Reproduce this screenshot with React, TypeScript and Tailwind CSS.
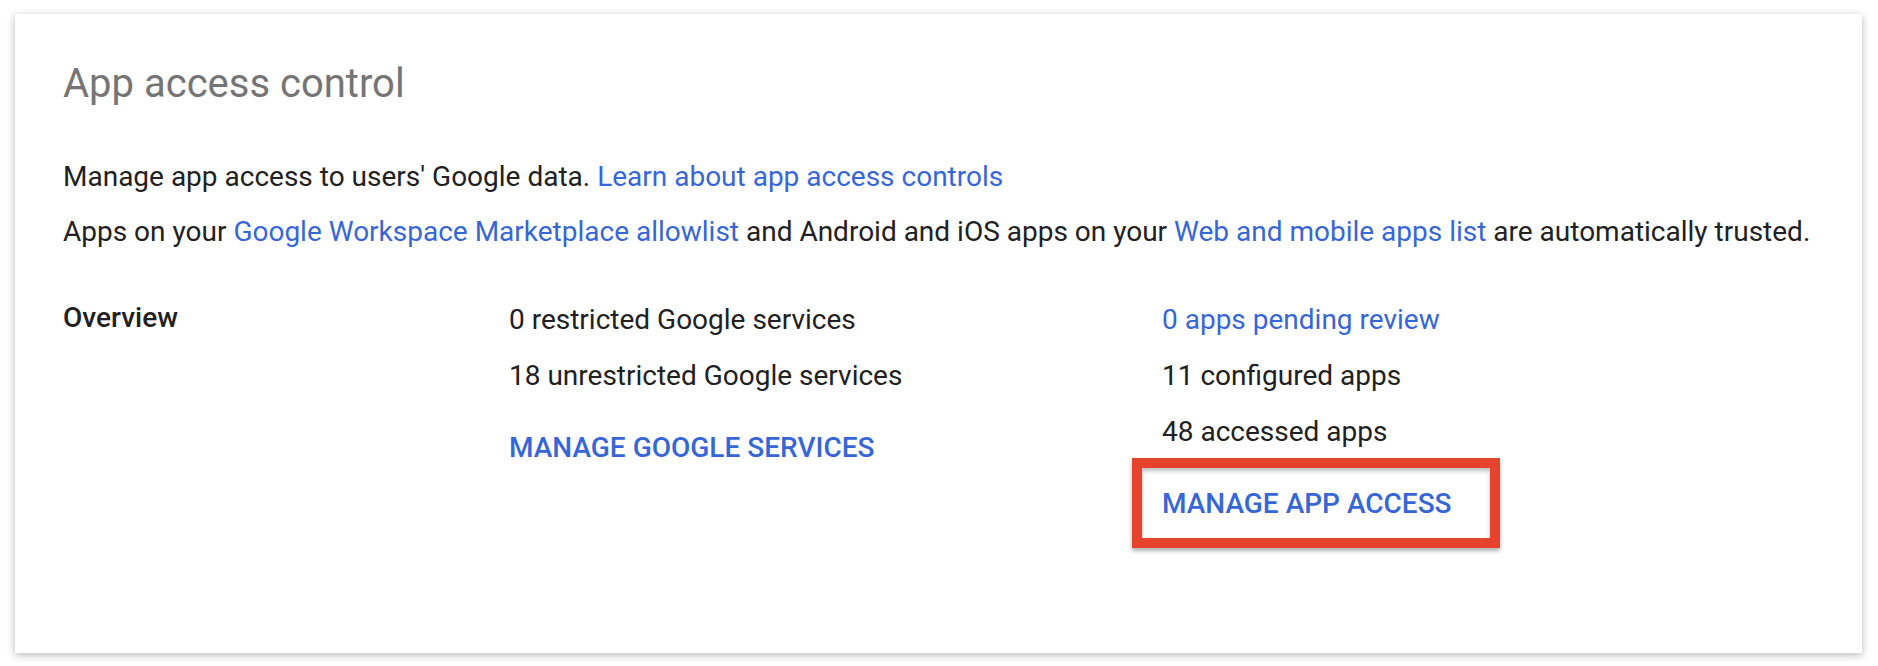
const link = "text-[#3767d6]";

function Row({ children, blue }: { children: React.ReactNode; blue?: boolean }) {
  return <div className={`leading-[56px] ${blue ? link : ""}`}>{children}</div>;
}

export default function App() {
  return (
    <div className="w-[1878px] h-[666px] bg-white pl-[15px] pr-[16px] pt-[14px] font-['Roboto',sans-serif] text-[#212121]">
      <div className="h-[639px] bg-white shadow-[0_2px_8px_rgba(0,0,0,0.28)] pl-[48px] pt-[45px]">
        <h1 className="text-[40px] leading-[50px] font-normal text-[#757575]">App access control</h1>

        <div className="mt-[40px] text-[28px] leading-[55px]">
          <p>
            Manage app access to users' Google data. <span className={link}>Learn about app access controls</span>
          </p>
          <p>
            Apps on your <span className={link}>Google Workspace Marketplace allowlist</span> and Android and iOS apps on
            your <span className={link}>Web and mobile apps list</span> are automatically trusted.
          </p>
        </div>

        <div className="mt-[33px] grid grid-cols-[446px_653px_1fr] text-[28px]">
          <div className="leading-[56px] font-medium -mt-[2px]">Overview</div>

          <div className="flex flex-col">
            <Row>0 restricted Google services</Row>
            <Row>18 unrestricted Google services</Row>
            <div className={`mt-[16px] leading-[56px] font-medium uppercase ${link}`}>Manage Google services</div>
          </div>

          <div className="flex flex-col">
            <Row blue>0 apps pending review</Row>
            <Row>11 configured apps</Row>
            <Row>48 accessed apps</Row>
            <div className="relative mt-[16px] self-start">
              <div className={`leading-[56px] font-medium uppercase ${link}`}>Manage app access</div>
              <div className="absolute -left-[30px] -top-[18px] w-[368px] h-[90px] border-[10px] border-[#e5432d] shadow-[0_3px_4px_rgba(0,0,0,0.3),inset_0_3px_4px_rgba(0,0,0,0.25)]" />
            </div>
          </div>
        </div>
      </div>
    </div>
  );
}
